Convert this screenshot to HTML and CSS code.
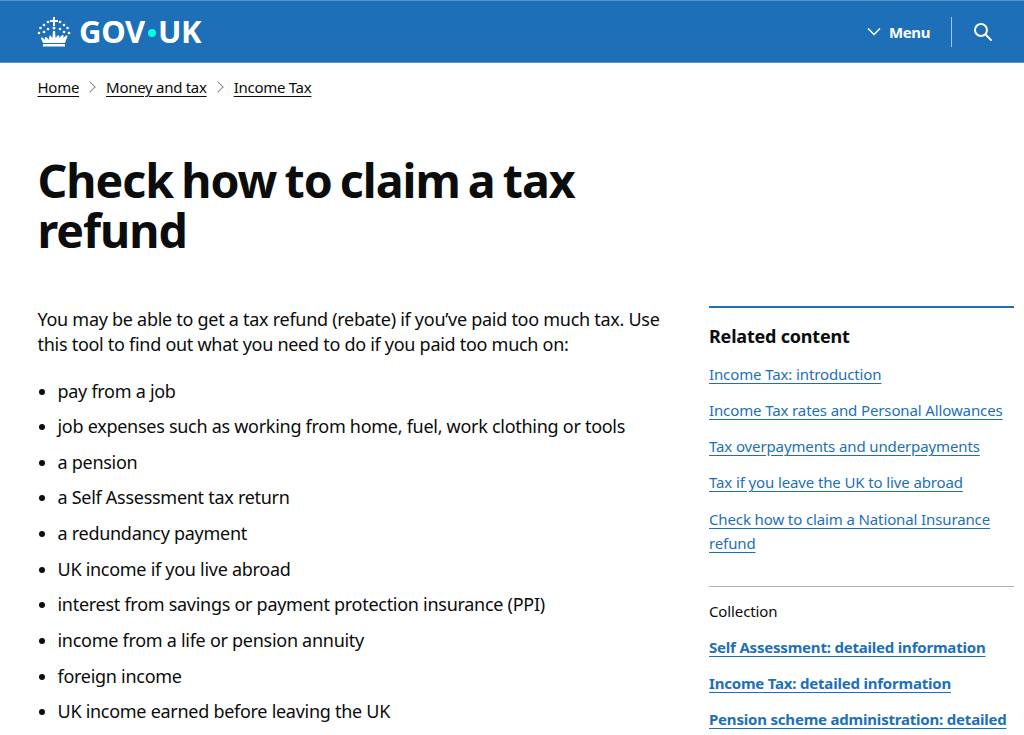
FILE: index.html
```html
<!DOCTYPE html>
<html lang="en">
<head>
<meta charset="utf-8">
<title>Check how to claim a tax refund</title>
<link rel="stylesheet" href="styles.css">
</head>
<body>
<header class="site-header">
  <a class="logo" href="#">
    <svg class="crown" width="34" height="31" viewBox="0 0 34 31" fill="#fff" aria-hidden="true">
      <path d="M16 1h2v3h3v2h-3v4h-2V6h-3V4h3z"/>
      <circle cx="11" cy="6" r="1.3"/><circle cx="23" cy="6" r="1.3"/>
      <circle cx="7" cy="9" r="1.3"/><circle cx="27" cy="9" r="1.3"/>
      <circle cx="3.5" cy="12" r="1.3"/><circle cx="30.5" cy="12" r="1.3"/>
      <circle cx="17" cy="12" r="1.5"/><circle cx="11" cy="13" r="1.3"/><circle cx="23" cy="13" r="1.3"/>
      <circle cx="2" cy="17" r="1.3"/><circle cx="32" cy="17" r="1.3"/>
      <circle cx="7" cy="16" r="1.3"/><circle cx="27" cy="16" r="1.3"/>
      <path d="M16 15h2l.6 7 2.4-3 1.6 1.3-.6 2 3.4-3.5 1.4 1-.8 2.2 3.4-2.8 1.2.9L28 27H6l-2.2-4.9 1.2-.9 3.4 2.8-.8-2.2 1.4-1 3.4 3.5-.6-2L13 19l2.4 3z"/>
      <path d="M6 28h22v2.500H6z"/>
    </svg>
    <span class="wordmark">GOV<span class="dot"></span>UK</span>
  </a>
  <nav class="header-nav">
    <a class="menu" href="#">
      <svg width="14" height="9" viewBox="0 0 14 9" fill="none" stroke="#fff" stroke-width="1.500" aria-hidden="true"><path d="M1 1.500l6 6 6-6"/></svg>
      <span>Menu</span>
    </a>
    <span class="divider"></span>
    <a class="search" href="#" aria-label="Search">
      <svg width="20" height="20" viewBox="0 0 20 20" fill="none" stroke="#fff" stroke-width="2" aria-hidden="true"><circle cx="8" cy="8" r="6"/><path d="M12.300 12.300l6.300 6.300"/></svg>
    </a>
  </nav>
</header>

<nav class="breadcrumbs">
  <a href="#">Home</a><span class="chev"></span>
  <a href="#">Money and tax</a><span class="chev"></span>
  <a href="#">Income Tax</a>
</nav>

<h1 class="title">Check how to claim a tax refund</h1>

<div class="columns">
  <main class="content">
    <p class="lead">You may be able to get a tax refund (rebate) if you’ve paid too much tax. Use this tool to find out what you need to do if you paid too much on:</p>
    <ul class="reasons">
      <li>pay from a job</li>
      <li>job expenses such as working from home, fuel, work clothing or tools</li>
      <li>a pension</li>
      <li>a Self Assessment tax return</li>
      <li>a redundancy payment</li>
      <li>UK income if you live abroad</li>
      <li>interest from savings or payment protection insurance (PPI)</li>
      <li>income from a life or pension annuity</li>
      <li>foreign income</li>
      <li>UK income earned before leaving the UK</li>
    </ul>
  </main>
  <aside class="sidebar">
    <h2 class="side-title">Related content</h2>
    <ul class="side-links">
      <li><a href="#">Income Tax: introduction</a></li>
      <li><a href="#">Income Tax rates and Personal Allowances</a></li>
      <li><a href="#">Tax overpayments and underpayments</a></li>
      <li><a href="#">Tax if you leave the UK to live abroad</a></li>
      <li><a href="#">Check how to claim a National Insurance refund</a></li>
    </ul>
    <div class="collection">
      <h3 class="collection-title">Collection</h3>
      <ul class="side-links bold">
        <li><a href="#">Self Assessment: detailed information</a></li>
        <li><a href="#">Income Tax: detailed information</a></li>
        <li><a href="#">Pension scheme administration: detailed information</a></li>
      </ul>
    </div>
  </aside>
</div>
</body>
</html>
```
FILE: styles.css
```css
* { box-sizing: border-box; }
html, body { margin: 0; padding: 0; height: 735px; overflow: hidden; }
body { font-family: "Noto Sans", "Liberation Sans", sans-serif; color: #0b0c0c; background: #fff; }
a { color: inherit; }
ul { list-style: none; margin: 0; padding: 0; }

.site-header { height: 63px; background: #1d70b8; border-top: 1px solid #5694ca; border-bottom: 1px solid #5694ca; display: flex; align-items: center; justify-content: space-between; padding: 0 31px 0 37px; }
.logo { display: flex; align-items: center; gap: 8px; color: #fff; text-decoration: none; }
.wordmark { display: flex; align-items: center; font-weight: 700; font-size: 31px; letter-spacing: -0.3px; line-height: 1; }
.dot { width: 8px; height: 8px; border-radius: 50%; background: #00ffe0; margin: 2px 2px 0 3px; }
.header-nav { display: flex; align-items: center; color: #fff; }
.menu { display: flex; align-items: center; gap: 8px; color: #fff; text-decoration: none; font-weight: 700; font-size: 15px; letter-spacing: -0.4px; }
.divider { width: 1px; height: 30px; background: #a5c6e3; margin: 0 21px 0 21px; }
.search { display: flex; }

.breadcrumbs { display: flex; align-items: center; padding: 0 0 0 37.500px; height: 48px; font-size: 15px; letter-spacing: -0.28px; line-height: 20px; }
.breadcrumbs a { text-underline-offset: 3px; }
.chev { width: 8px; height: 8px; border-top: 1px solid #8a8d8e; border-right: 1px solid #8a8d8e; transform: rotate(45deg); margin: 0 12px 0 7px; }

.title { margin: 0; width: 640px; padding: 44px 0 0 37.500px; font-size: 46.500px; line-height: 50px; font-weight: 700; letter-spacing: -1px; word-spacing: -3px; }

.columns { display: flex; padding: 0 10px 0 37.500px; margin-top: 51px; align-items: flex-start; }
.content { width: 631.500px; margin-right: 40px; padding-top: 1px; font-size: 18px; letter-spacing: -0.28px; }
.lead { margin: 0 0 21.500px; line-height: 25px; }
.reasons { list-style: disc; padding-left: 20px; }
.reasons li { line-height: 25px; margin-bottom: 10.650px; }

.sidebar { width: 305px; border-top: 2px solid #1d70b8; font-size: 15px; letter-spacing: -0.12px; }
.side-title { margin: 17px 0 14px; font-size: 18px; line-height: 23px; font-weight: 700; letter-spacing: -0.2px; }
.side-links { display: flex; flex-direction: column; gap: 12px; color: #1d70b8; line-height: 24px; }
.side-links li:last-child { margin-top: 1px; }
.side-links a { text-underline-offset: 3px; }
.collection { margin-top: 31px; padding-top: 12px; border-top: 1px solid #b1b4b6; }
.collection-title { margin: 0 0 12px; font-size: 15px; line-height: 24px; font-weight: 400; }
.bold { font-weight: 700; letter-spacing: -0.2px; line-height: 22px; gap: 14px; padding-top: 1px; }
.bold li:last-child { margin-top: 0; }
```
